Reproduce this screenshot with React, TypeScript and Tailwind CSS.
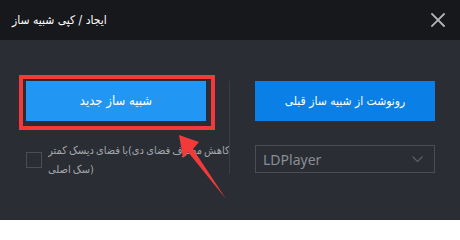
import React from "react";

const fa = "font-['DejaVu_Sans_Condensed','DejaVu_Sans',sans-serif]";

export default function App() {
  return (
    <div className="relative w-[460px] h-[220px] bg-[#2a2d34] flex flex-col overflow-hidden font-['Noto_Sans','DejaVu_Sans',sans-serif]">
      <div className="h-[40px] shrink-0 bg-[#17181c] flex items-center justify-between pl-[12px] pr-[14px]">
        <span className={`text-white text-[12px] leading-none ${fa}`}>ایجاد / کپی شبیه ساز</span>
        <svg width="14" height="14" viewBox="0 0 14 14" className="mr-[1px]">
          <path d="M1 1 L13 13 M13 1 L1 13" stroke="#b4b4b4" strokeWidth="1.8" strokeLinecap="square" />
        </svg>
      </div>
      <div className="flex pt-[41px] pl-[26px]">
        <div className="w-[180px] flex flex-col">
          <div className="relative">
            <button className={`w-full h-[40px] bg-[#2196f3] text-white text-[13px] ${fa}`}>
              شبیه ساز جدید
            </button>
            <div className="absolute left-[-7px] top-[-6px] right-[-9px] bottom-[-9px] border-4 border-[#f23a3a] pointer-events-none" />
          </div>
          <div className="mt-[20px] flex items-center gap-[6px]">
            <div className="w-[16px] h-[16px] shrink-0 border border-[#4a4d55]" />
            <div className={`w-[181px] shrink-0 overflow-hidden text-[11px] leading-[19px] [word-spacing:-1px] text-[#a3a6ab] ${fa}`}>
              <div className="text-left whitespace-nowrap">کاهش مصرف فضای دی)با فضای دیسک کمتر</div>
              <div dir="rtl" className="text-left whitespace-nowrap">(سک اصلی</div>
            </div>
          </div>
        </div>
        <div className="ml-[23px] w-px h-[93px] bg-[#3a3d45]" />
        <div className="ml-[25px] w-[180px] flex flex-col">
          <button className={`w-full h-[40px] bg-[#0a80e6] text-white text-[12px] ${fa}`}>
            رونوشت از شبیه ساز قبلی
          </button>
          <div className="mt-[24px] h-[28px] border border-[#4a4d55] flex items-center justify-between pl-[7px] pr-[11px]">
            <span className="text-[14px] text-[#8b8e94]">LDPlayer</span>
            <svg width="11" height="6" viewBox="0 0 11 6">
              <path d="M0.5 0.5 L5.5 5.5 L10.5 0.5" fill="none" stroke="#5c5f66" strokeWidth="1.2" />
            </svg>
          </div>
        </div>
      </div>
      <svg
        className="absolute left-[175px] top-[130px] w-[56px] h-[72px] pointer-events-none"
        viewBox="175 130 56 72"
      >
        <polygon points="179,135 199,142 193,149 226,199 188,152 183,158" fill="#f23a3a" />
      </svg>
    </div>
  );
}
